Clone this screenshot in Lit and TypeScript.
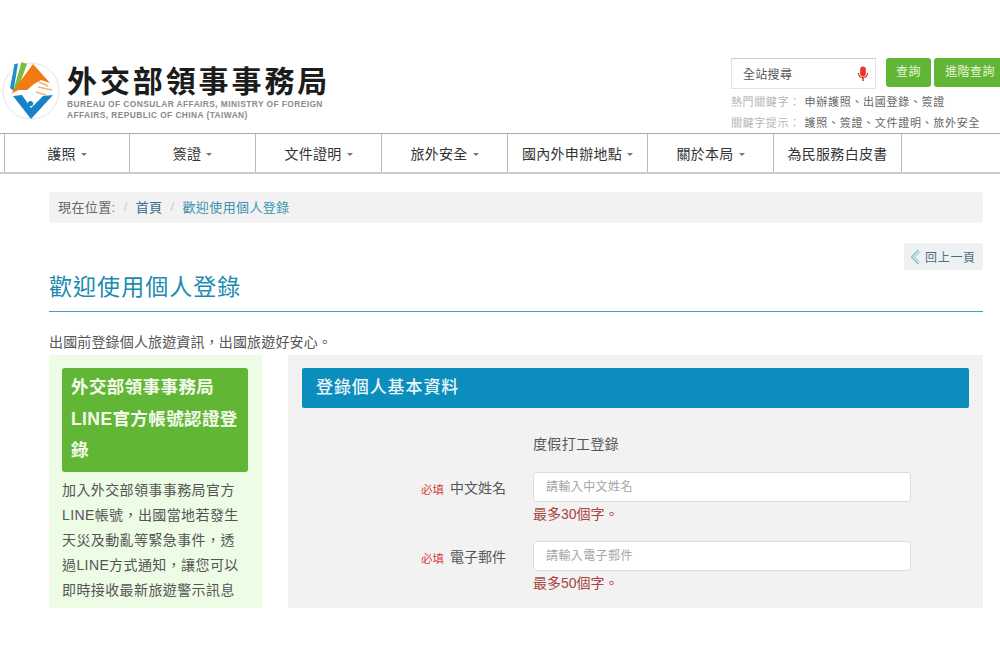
import { LitElement, html, css, svg } from 'lit';
import { customElement } from 'lit/decorators.js';

const NAV = [
  { label: '護照', width: 125, caret: true },
  { label: '簽證', width: 126, caret: true },
  { label: '文件證明', width: 126, caret: true },
  { label: '旅外安全', width: 126, caret: true },
  { label: '國內外申辦地點', width: 140, caret: true },
  { label: '關於本局', width: 126, caret: true },
  { label: '為民服務白皮書', width: 129, caret: false },
];

const logo = svg`
  <circle cx="31" cy="33" r="28" fill="#fff" stroke="#e6e2e2" stroke-width="1"/>
  <path d="M10 30 L14.5 6 L18 5.5 L13.5 33 Z" fill="#1f8fc4"/>
  <path d="M13 34 L21.5 4 L27 6 L17 33 Z" fill="#7cbc3f"/>
  <path d="M11 36 L33 6 L50 25 L41 22 L34 26 L27 32 L18 32 Z" fill="#f27a12"/>
  <path d="M39 24 L48 28" stroke="#f6b27a" stroke-width="1.5" fill="none"/>
  <path d="M38 29 L52 32" stroke="#f6b27a" stroke-width="1.5" fill="none"/>
  <path d="M36 34 L46 37" stroke="#f6b27a" stroke-width="1.5" fill="none"/>
  <path d="M13 38 L22 37 L31 50 L43 38 L53 37 L31 61 Z" fill="#1584c6"/>
  <circle cx="30.5" cy="45.5" r="2.6" fill="#1584c6"/>
`;

@customElement('app-root')
export class AppRoot extends LitElement {
  static styles = css`
    :host {
      display: block;
      width: 1000px;
      height: 667px;
      overflow: hidden;
      background: #fff;
      font-family: 'Liberation Sans', 'Noto Sans CJK TC', sans-serif;
      color: #444;
    }
    .header {
      height: 133px;
      box-sizing: border-box;
      padding-top: 58px;
      display: flex;
      justify-content: space-between;
    }
    .brand {
      display: flex;
      gap: 3px;
    }
    .logo {
      width: 64px;
      height: 66px;
    }
    .brand-text {
      padding-top: 6px;
    }
    .brand-name {
      font-size: 30px;
      line-height: 36px;
      font-weight: 700;
      letter-spacing: 2.9px;
      color: #1c1c1c;
      white-space: nowrap;
    }
    .brand-en {
      margin-top: -1px;
      font-size: 8.4px;
      line-height: 11px;
      font-weight: 700;
      color: #8a8a8a;
      letter-spacing: 0.42px;
      white-space: nowrap;
    }
    .tools {
      width: 269px;
      flex: none;
    }
    .search-row {
      display: flex;
    }
    .search {
      flex: none;
      width: 126px;
      height: 29px;
      border: 1px solid #e2e2e2;
      border-top-color: #ccc;
      display: flex;
      align-items: center;
      justify-content: space-between;
      padding: 0 6px 0 11px;
      font-size: 12px;
      color: #555;
      letter-spacing: 0.3px;
    }
    .mic {
      width: 12px;
      height: 16px;
    }
    .btn {
      flex: none;
      height: 29px;
      background: #62b635;
      color: #e8f5de;
      border-radius: 3px;
      font-size: 12px;
      line-height: 29px;
      text-align: center;
      letter-spacing: 0.4px;
    }
    .btn.query {
      width: 45px;
      margin-left: 10px;
    }
    .btn.advanced {
      width: 72px;
      margin-left: 3px;
    }
    .keywords {
      margin-top: 3px;
      font-size: 11px;
      line-height: 21px;
      color: #b5b5b5;
      letter-spacing: 0.6px;
      white-space: nowrap;
    }
    .keywords span {
      color: #666;
      margin-left: 4px;
      letter-spacing: 0.7px;
    }
    .nav {
      height: 41px;
      box-sizing: border-box;
      border-top: 1px solid #aaa;
      border-bottom: 2px solid #ccc;
      padding-left: 4px;
      display: flex;
    }
    .nav-item {
      box-sizing: border-box;
      border-left: 1px solid #bbb;
      display: flex;
      align-items: center;
      justify-content: center;
      gap: 5px;
      font-size: 14px;
      color: #333;
      letter-spacing: 0.3px;
      white-space: nowrap;
    }
    .nav-item:last-child {
      border-right: 1px solid #bbb;
    }
    .caret {
      width: 0;
      height: 0;
      margin-top: 2px;
      border-left: 3px solid transparent;
      border-right: 3px solid transparent;
      border-top: 3px solid #777;
    }
    .main {
      padding: 18px 17px 0 49px;
    }
    .crumbs {
      height: 31px;
      box-sizing: border-box;
      background: #f2f2f2;
      border-radius: 3px;
      padding: 0 0 2px 9px;
      display: flex;
      align-items: center;
      font-size: 13px;
      color: #666;
      letter-spacing: 0.4px;
    }
    .crumbs .sep {
      margin: 0 8px;
      color: #ccc;
    }
    .crumbs .link {
      color: #2f6f88;
    }
    .crumbs .current {
      color: #3a93b0;
    }
    .back-row {
      display: flex;
      justify-content: flex-end;
      margin-top: 20px;
    }
    .back {
      width: 79px;
      height: 27px;
      box-sizing: border-box;
      background: #eef1f1;
      border-radius: 3px;
      display: flex;
      align-items: center;
      gap: 5px;
      padding-left: 6px;
      font-size: 12px;
      color: #4c6f7c;
      letter-spacing: 0.7px;
    }
    .back svg {
      width: 10px;
      height: 16px;
    }
    h1 {
      margin: 2px 0 0;
      height: 39px;
      font-size: 23px;
      line-height: 30px;
      font-weight: 400;
      letter-spacing: 1.05px;
      color: #1a8ab0;
      border-bottom: 1px solid #3f9fc0;
    }
    .intro {
      margin: 20px 0 0;
      font-size: 14px;
      line-height: 20px;
      color: #555;
      letter-spacing: 0.15px;
    }
    .cols {
      margin-top: 3px;
      height: 253px;
      display: flex;
      gap: 26px;
    }
    .side {
      width: 213px;
      flex: none;
      box-sizing: border-box;
      background: #edfce5;
      padding: 13px 14px 0 13px;
      overflow: hidden;
    }
    .side-title {
      background: #62b635;
      border-radius: 3px;
      padding: 4px 9px 5px;
      font-size: 17.5px;
      line-height: 31.5px;
      font-weight: 700;
      color: #f3faec;
      letter-spacing: 0.4px;
    }
    .side-text {
      margin: 6px 0 0;
      font-size: 14px;
      line-height: 25px;
      color: #555;
      letter-spacing: 0.4px;
    }
    .panel {
      flex: 1;
      background: #f2f2f2;
      padding: 13px 14px 0;
      overflow: hidden;
    }
    .panel-head {
      height: 40px;
      background: #0b8dbd;
      border-radius: 2px;
      padding-left: 14px;
      font-size: 17px;
      line-height: 40px;
      font-weight: 500;
      color: #e8f5fa;
      letter-spacing: 0.9px;
    }
    .type {
      margin: 26px 0 0 231px;
      font-size: 14px;
      line-height: 20px;
      color: #555;
      letter-spacing: 0.35px;
    }
    .field {
      display: grid;
      grid-template-columns: 204px 378px;
      column-gap: 27px;
      margin-top: 18px;
    }
    .field + .field {
      margin-top: 17px;
    }
    .label {
      height: 30px;
      display: flex;
      justify-content: flex-end;
      align-items: center;
      gap: 6px;
      font-size: 14px;
      color: #555;
    }
    .label small {
      font-size: 11.5px;
      color: #d43f3f;
      margin-top: 3px;
    }
    .input {
      height: 30px;
      box-sizing: border-box;
      background: #fff;
      border: 1px solid #ddd;
      border-radius: 3px;
      padding-left: 12px;
      font-size: 12px;
      line-height: 28px;
      color: #a5a5a5;
      letter-spacing: 0.4px;
    }
    .hint {
      grid-column: 2;
      margin-top: 2px;
      font-size: 14px;
      line-height: 20px;
      color: #a94442;
    }
  `;

  render() {
    return html`
      <div class="header">
        <div class="brand">
          <svg class="logo" viewBox="0 0 64 66">${logo}</svg>
          <div class="brand-text">
            <div class="brand-name">外交部領事事務局</div>
            <div class="brand-en">
              BUREAU OF CONSULAR AFFAIRS, MINISTRY OF FOREIGN<br />
              AFFAIRS, REPUBLIC OF CHINA (TAIWAN)
            </div>
          </div>
        </div>
        <div class="tools">
          <div class="search-row">
            <div class="search">
              全站搜尋
              <svg class="mic" viewBox="0 0 12 16">
                <rect x="3.2" y="0.5" width="5.6" height="10" rx="2.8" fill="#e4352b" />
                <path d="M1.5 7 C1.5 13 10.5 13 10.5 7" fill="none" stroke="#e4352b" stroke-width="1.2" />
                <path d="M6 12 V15" stroke="#e4352b" stroke-width="1.6" />
              </svg>
            </div>
            <div class="btn query">查詢</div>
            <div class="btn advanced">進階查詢</div>
          </div>
          <div class="keywords">
            <div>熱門關鍵字：<span>申辦護照、出國登錄、簽證</span></div>
            <div>關鍵字提示：<span>護照、簽證、文件證明、旅外安全</span></div>
          </div>
        </div>
      </div>
      <nav class="nav">
        ${NAV.map(
          (n) => html`
            <div class="nav-item" style="width:${n.width}px">
              ${n.label}${n.caret ? html`<i class="caret"></i>` : ''}
            </div>
          `
        )}
      </nav>
      <div class="main">
        <div class="crumbs">
          現在位置:<span class="sep">/</span><span class="link">首頁</span><span class="sep">/</span
          ><span class="current">歡迎使用個人登錄</span>
        </div>
        <div class="back-row">
          <div class="back">
            <svg viewBox="0 0 10 16">
              <path d="M8.5 1 L1.5 8 L8.5 15" fill="none" stroke="#7fb8cc" stroke-width="1.2" />
              <path d="M9.5 3 L4.5 8 L9.5 13" fill="none" stroke="#7fb8cc" stroke-width="1" />
            </svg>
            回上一頁
          </div>
        </div>
        <h1>歡迎使用個人登錄</h1>
        <p class="intro">出國前登錄個人旅遊資訊，出國旅遊好安心。</p>
        <div class="cols">
          <aside class="side">
            <div class="side-title">外交部領事事務局LINE官方帳號認證登錄</div>
            <p class="side-text">加入外交部領事事務局官方LINE帳號，出國當地若發生天災及動亂等緊急事件，透過LINE方式通知，讓您可以即時接收最新旅遊警示訊息</p>
          </aside>
          <section class="panel">
            <div class="panel-head">登錄個人基本資料</div>
            <div class="type">度假打工登錄</div>
            <div class="field">
              <div class="label"><small>必填</small>中文姓名</div>
              <div class="input">請輸入中文姓名</div>
              <div class="hint">最多30個字。</div>
            </div>
            <div class="field">
              <div class="label"><small>必填</small>電子郵件</div>
              <div class="input">請輸入電子郵件</div>
              <div class="hint">最多50個字。</div>
            </div>
          </section>
        </div>
      </div>
    `;
  }
}
